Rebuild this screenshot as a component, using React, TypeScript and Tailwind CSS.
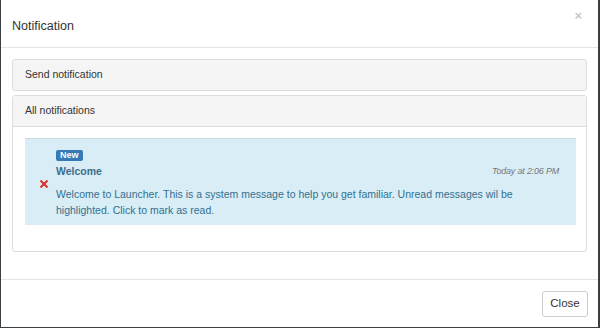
import React from "react";

export default function App() {
  return (
    <div className="w-[600px] h-[328px] bg-[#3a3f44] flex" style={{ fontFamily: '"Liberation Sans", Arial, sans-serif' }}>
      <div className="ml-px w-[597px] h-[327px] bg-white flex flex-col">
        <div className="h-[48px] border-b border-[#e5e5e5] flex items-start justify-between pl-[11px] pr-[16px]">
          <div className="pt-[19px] text-[12.5px] leading-[14px] text-[#333]">Notification</div>
          <div className="pt-[9px] text-[13px] font-bold text-[#c8c8c8] leading-none">×</div>
        </div>
        <div className="flex-1 px-[11px] pt-[11px]">
          <div className="h-[32px] border border-[#ddd] rounded-[3px] bg-[#f5f5f5] flex items-center px-[12px] text-[10.5px] text-[#333]">
            Send notification
          </div>
          <div className="mt-[4px] border border-[#ddd] rounded-[3px] pb-[26px]">
            <div className="h-[31px] bg-[#f5f5f5] border-b border-[#ddd] flex items-center px-[12px] text-[10.5px] text-[#333]">
              All notifications
            </div>
            <div className="pl-[12px] pr-[10px] pt-[11px]">
              <div className="bg-[#d9edf7] border-t border-[#c9d9e2] h-[87px] flex text-[#31708f]">
                <div className="w-[31px] flex items-center pl-[15px] pt-[4px]">
                  <svg width="8" height="8" viewBox="0 0 8 8">
                    <path d="M1.2 1.2 L6.8 6.8 M6.8 1.2 L1.2 6.8" stroke="#d9302c" strokeWidth="2" strokeLinecap="square" />
                  </svg>
                </div>
                <div className="flex-1 pt-[11px] pr-[17px]">
                  <div className="w-fit bg-[#337ab7] text-white text-[9px] font-bold leading-[11px] px-[4px] rounded-[2px]">New</div>
                  <div className="flex justify-between items-center mt-[2px] h-[16px]">
                    <div className="text-[10.5px] font-bold leading-[16px] text-[#3a6f8c]">Welcome</div>
                    <div className="text-[9px] italic text-[#777] tracking-[-0.2px] leading-[16px]">Today at 2:06 PM</div>
                  </div>
                  <div className="mt-[7px] text-[10.5px] leading-[16px]">
                    Welcome to Launcher. This is a system message to help you get familiar. Unread messages wil be highlighted. Click to mark as read.
                  </div>
                </div>
              </div>
            </div>
          </div>
        </div>
        <div className="h-[48px] border-t border-[#e5e5e5] flex items-center justify-end pr-[10px]">
          <button className="h-[26px] w-[46px] border border-[#ccc] rounded-[3px] bg-white text-[11.5px] text-[#333]">Close</button>
        </div>
      </div>
    </div>
  );
}
